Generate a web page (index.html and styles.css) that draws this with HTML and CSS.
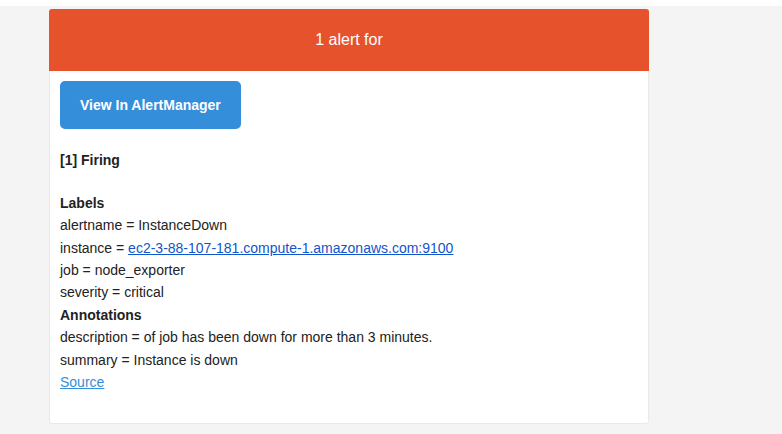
FILE: index.html
```html
<!DOCTYPE html>
<html>
<head>
<meta charset="utf-8">
<link rel="stylesheet" href="styles.css">
</head>
<body>
<div class="wrap">
  <div class="main">
    <div class="alert">1 alert for</div>
    <div class="content-wrap">
      <div class="content-block">
        <a class="btn-primary" href="#">View In AlertManager</a>
      </div>
      <div class="content-block">
        <div class="firing"><strong>[1] Firing</strong></div>
        <strong>Labels</strong><br>
        alertname = InstanceDown<br>
        instance = <a class="ext" href="#">ec2-3-88-107-181.compute-1.amazonaws.com:9100</a><br>
        job = node_exporter<br>
        severity = critical<br>
        <strong>Annotations</strong><br>
        description = of job has been down for more than 3 minutes.<br>
        summary = Instance is down<br>
        <a class="src" href="#">Source</a><br>
      </div>
    </div>
  </div>
</div>
</body>
</html>
```
FILE: styles.css
```css
html, body {
  margin: 0;
  padding: 0;
  background: #ffffff;
}
body {
  font-family: "Liberation Sans", Arial, Helvetica, sans-serif;
  font-size: 14px;
  line-height: 1.6;
  color: #222222;
}
.wrap {
  margin-top: 6px;
  background: #f4f4f4;
  padding: 3px 0 11px 49px;
  min-height: 428px;
  box-sizing: border-box;
}
.main {
  width: 600px;
  box-sizing: border-box;
  background: #ffffff;
  border: 1px solid #e9e9e9;
  border-radius: 3px;
}
.alert {
  background: #e6522c;
  color: #ffffff;
  font-size: 16px;
  line-height: 22px;
  padding: 20px;
  text-align: center;
  border-radius: 3px 3px 0 0;
  margin: -1px -1px 0 -1px;
}
.content-wrap {
  padding: 10px;
}
.content-block {
  padding: 0 0 20px 0;
}
.firing {
  margin-bottom: 20.5px;
}
.btn-primary {
  display: inline-block;
  text-decoration: none;
  color: #ffffff;
  background: #348eda;
  border: solid #348eda;
  border-width: 10px 20px;
  line-height: 2;
  font-weight: bold;
  text-align: center;
  border-radius: 5px;
}
.ext {
  color: #1155cc;
}
.src {
  color: #348eda;
}
```
